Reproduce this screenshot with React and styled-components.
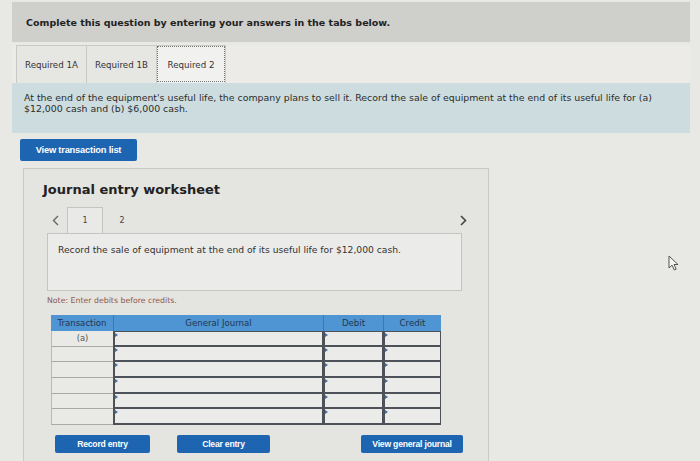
import React from "react";
import styled, { createGlobalStyle } from "styled-components";

const Global = createGlobalStyle`
  body {
    margin: 0;
    background: #e8e8e5;
    font-family: "DejaVu Sans", Verdana, sans-serif;
    color: #2b2b2b;
  }
`;

const Page = styled.div`
  position: relative;
  width: 700px;
  height: 461px;
  overflow: hidden;
  padding: 2px 10px 0 12px;
  box-sizing: border-box;
`;

const Header = styled.div`
  height: 40px;
  background: #cfcfcc;
  display: flex;
  align-items: center;
  padding-left: 14px;
  font-size: 9.5px;
  font-weight: bold;
  color: #222;
`;

const TabBar = styled.div`
  margin-top: 3px;
  height: 38px;
  background: #ecebe8;
  display: flex;
  align-items: stretch;
  padding-left: 4px;
`;

const Tab = styled.div`
  width: 70px;
  display: flex;
  align-items: center;
  justify-content: center;
  font-size: 8.7px;
  color: #333;
  box-sizing: border-box;
  border: 1px solid #c9c9c6;
  border-bottom: none;
  border-right: ${p => (p.$last ? "1px solid #c9c9c6" : "none")};
  background: ${p => (p.$active ? "#f1f1ef" : "#e6e6e3")};
  outline: ${p => (p.$active ? "1px dotted #777" : "none")};
  outline-offset: -2px;
`;

const Info = styled.div`
  height: 50px;
  box-sizing: border-box;
  background: #cddcdf;
  padding: 9px 10px 0 12px;
  font-size: 9.4px;
  line-height: 11px;
  color: #2c2c2c;
`;

const BlueButton = styled.button`
  background: #1d64b1;
  color: #fff;
  border: none;
  border-radius: 2px;
  font-family: "Liberation Sans", Arial, sans-serif;
  font-weight: bold;
  font-size: 8.6px;
  letter-spacing: -0.2px;
  height: ${p => p.$h || 18}px;
  width: ${p => p.$w}px;
  padding: 0;
`;

const ListButton = styled(BlueButton)`
  margin: 6px 0 0 8px;
  height: 22px;
  font-size: 9.3px;
  display: block;
`;

const Panel = styled.div`
  margin: 7px 0 0 11px;
  width: 466px;
  height: 300px;
  box-sizing: border-box;
  border: 1px solid #c9c9c6;
  background: #e4e4e1;
  padding: 12px 0 0 23px;
`;

const Title = styled.h2`
  margin: 0 0 0 -4px;
  font-size: 13px;
  font-weight: bold;
  color: #222;
  line-height: 18px;
`;

const NavRow = styled.div`
  margin-top: 8px;
  display: flex;
  align-items: stretch;
  height: 26px;
  width: 420px;
`;

const Arrow = styled.div`
  width: 24px;
  display: flex;
  align-items: center;
  justify-content: ${p => (p.$right ? "flex-end" : "center")};
  margin-left: ${p => (p.$right ? "auto" : "-4px")};
  color: #555;
`;

const StepTab = styled.div`
  width: 36px;
  display: flex;
  align-items: center;
  justify-content: center;
  font-size: 8px;
  color: #444;
  box-sizing: border-box;
  border: ${p => (p.$active ? "1px solid #c4c4c1" : "none")};
  border-bottom: none;
  background: ${p => (p.$active ? "#e9e9e7" : "transparent")};
  margin-left: ${p => (p.$active ? "0" : "1px")};
`;

const RecordBox = styled.div`
  width: 415px;
  height: 58px;
  box-sizing: border-box;
  border: 1px solid #c4c4c1;
  background: #ebebe9;
  padding: 10px 0 0 10px;
  font-size: 9.2px;
  color: #333;
`;

const Note = styled.div`
  margin-top: 5px;
  font-size: 7.8px;
  color: #8f5a4e;
`;

const Table = styled.div`
  margin: 10px 0 0 4px;
  width: 390px;
  display: grid;
  grid-template-columns: 62px 210px 60px 58px;
`;

const Head = styled.div`
  height: 16px;
  background: #4f95d4;
  color: #1f3550;
  font-size: 8.6px;
  display: flex;
  align-items: center;
  justify-content: center;
  border-left: ${p => (p.$first ? "none" : "1px solid #3c78b2")};
`;

const TxCell = styled.div`
  height: 15.7px;
  box-sizing: border-box;
  border-bottom: 1px solid #a9a9a6;
  border-left: 1px solid #b9b9b6;
  background: #e9e9e6;
  font-size: 8.4px;
  color: #555;
  display: flex;
  align-items: center;
  justify-content: center;
`;

const InputCell = styled.div`
  position: relative;
  height: 15.7px;
  box-sizing: border-box;
  border: 1px solid #4d5158;
  border-top-width: ${p => (p.$top ? 1 : 0)}px;
  border-left-width: 2px;
  border-bottom-width: 2px;
  background: #ebebe9;
  &::before {
    content: "";
    position: absolute;
    left: 0;
    top: 1px;
    border-left: 3px solid #3b6fb0;
    border-top: 2px solid transparent;
    border-bottom: 2px solid transparent;
  }
`;

const ButtonRow = styled.div`
  margin: 10px 0 0 8px;
  display: flex;
  align-items: center;
  gap: 27px;
  width: 408px;
`;

const Spacer = styled.div`
  flex: 1;
`;

const Cursor = styled.svg`
  position: absolute;
  left: 668px;
  top: 255px;
`;

const rows = ["(a)", "", "", "", "", ""];

export default function App() {
  return (
    <Page>
      <Global />
      <Header>Complete this question by entering your answers in the tabs below.</Header>
      <TabBar>
        <Tab>Required 1A</Tab>
        <Tab>Required 1B</Tab>
        <Tab $active $last>Required 2</Tab>
      </TabBar>
      <Info>
        At the end of the equipment's useful life, the company plans to sell it. Record the sale of equipment at the end of its useful life for (a)
        <br />
        $12,000 cash and (b) $6,000 cash.
      </Info>
      <ListButton $w={117}>View transaction list</ListButton>
      <Panel>
        <Title>Journal entry worksheet</Title>
        <NavRow>
          <Arrow>
            <svg width="7" height="11" viewBox="0 0 7 11">
              <path d="M6 1 L1.5 5.5 L6 10" fill="none" stroke="#666" strokeWidth="1.4" />
            </svg>
          </Arrow>
          <StepTab $active>1</StepTab>
          <StepTab>2</StepTab>
          <Arrow $right>
            <svg width="7" height="11" viewBox="0 0 7 11">
              <path d="M1 1 L5.5 5.5 L1 10" fill="none" stroke="#444" strokeWidth="1.6" />
            </svg>
          </Arrow>
        </NavRow>
        <RecordBox>Record the sale of equipment at the end of its useful life for $12,000 cash.</RecordBox>
        <Note>Note: Enter debits before credits.</Note>
        <Table>
          <Head $first>Transaction</Head>
          <Head>General Journal</Head>
          <Head>Debit</Head>
          <Head>Credit</Head>
          {rows.map((t, i) => (
            <React.Fragment key={i}>
              <TxCell>{t}</TxCell>
              <InputCell $top={i === 0} />
              <InputCell $top={i === 0} />
              <InputCell $top={i === 0} />
            </React.Fragment>
          ))}
        </Table>
        <ButtonRow>
          <BlueButton $w={95} $h={18}>Record entry</BlueButton>
          <BlueButton $w={93} $h={18}>Clear entry</BlueButton>
          <Spacer />
          <BlueButton $w={102} $h={18}>View general journal</BlueButton>
        </ButtonRow>
      </Panel>
      <Cursor width="12" height="16" viewBox="0 0 12 16">
        <path d="M1 1 L1 13 L4 10.2 L6.3 15 L8.2 14.1 L6 9.5 L10 9.5 Z" fill="#f4f4f2" stroke="#555" strokeWidth="1" strokeLinejoin="round" />
      </Cursor>
    </Page>
  );
}
